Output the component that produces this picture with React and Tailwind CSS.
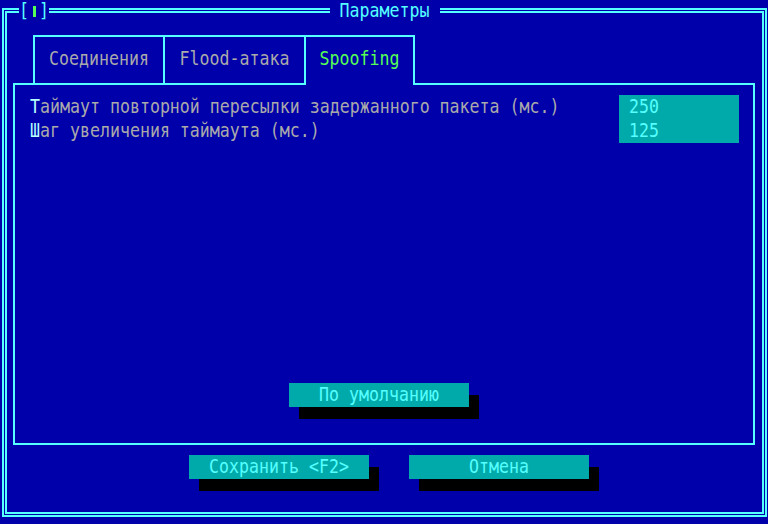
import React from 'react';

const fields = [
  { hot: 'Т', rest: 'аймаут повторной пересылки задержанного пакета (мс.)', value: '250' },
  { hot: 'Ш', rest: 'аг увеличения таймаута (мс.)', value: '125' },
];

const tabs = [
  { label: 'Соединения', w: 'w-[130px]' },
  { label: 'Flood-атака', w: 'w-[141px]' },
];

// текст в духе текстового режима: чуть вытянут по вертикали
function T({ children }) {
  return <span className="inline-block scale-y-[1.2] whitespace-pre">{children}</span>;
}

function Button({ children }) {
  return (
    <div className="w-[180px] h-[24px] leading-[24px] bg-[#00aaaa] text-[#55ffff] text-center shadow-[10px_12px_0_0_#000000]">
      <T>{children}</T>
    </div>
  );
}

export default function App() {
  return (
    <div className="w-[768px] h-[524px] bg-[#0000aa] pt-[8px] pl-[2px] font-['DejaVu_Sans_Mono','Liberation_Mono',monospace] text-[16.6px] text-[#aaaaaa] overflow-hidden">
      {/* двойная рамка окна */}
      <div className="relative w-[765px] h-[509px] border-2 border-[#55ffff] p-px">
        <div className="h-full border-2 border-[#55ffff] pl-[6px] pt-[22px]">
          {/* вкладки */}
          <div className="flex ml-[20px] h-[48px]">
            {tabs.map((t) => (
              <div
                key={t.label}
                className={`${t.w} h-[48px] border-t-2 border-l-2 border-[#55ffff] flex items-center justify-center pb-[2px]`}
              >
                <T>{t.label}</T>
              </div>
            ))}
            <div className="relative z-10 w-[111px] h-[50px] border-t-2 border-x-2 border-[#55ffff] bg-[#0000aa] flex items-center justify-center pb-[4px] text-[#55ff55]">
              <T>Spoofing</T>
            </div>
          </div>

          {/* панель вкладки */}
          <div className="w-[742px] h-[362px] border-2 border-[#55ffff] flex flex-col pt-[10px] pl-[15px] pr-[14px]">
            <div className="flex">
              <div className="flex-1">
                {fields.map((f) => (
                  <div key={f.hot} className="h-[24px] leading-[24px]">
                    <T>
                      <span className="text-[#b8ffff]">{f.hot}</span>
                      {f.rest}
                    </T>
                  </div>
                ))}
              </div>
              <div className="w-[120px] bg-[#00aaaa] text-[#55ffff] pl-[10px]">
                {fields.map((f) => (
                  <div key={f.value} className="h-[24px] leading-[24px]">
                    <T>{f.value}</T>
                  </div>
                ))}
              </div>
            </div>
            <div className="mt-auto mb-[36px] ml-[259px]">
              <Button>По умолчанию</Button>
            </div>
          </div>

          {/* кнопки диалога */}
          <div className="flex gap-[40px] mt-[10px] ml-[176px]">
            <Button>Сохранить &lt;F2&gt;</Button>
            <Button>Отмена</Button>
          </div>
        </div>

        {/* заголовок поверх рамки */}
        <div className="absolute top-[-11px] left-[15px] w-[30px] h-[24px] bg-[#0000aa] flex items-center text-[#55ffff] leading-[24px]">
          <span className="w-[10px] text-center">
            <T>[</T>
          </span>
          <span className="w-[10px] flex justify-center">
            <span className="w-[3px] h-[11px] bg-[#55ff55]" />
          </span>
          <span className="w-[10px] text-center">
            <T>]</T>
          </span>
        </div>
        <div className="absolute top-[-11px] left-1/2 -translate-x-1/2 w-[110px] h-[24px] leading-[24px] bg-[#0000aa] text-center text-[#55ffff]">
          <T>Параметры</T>
        </div>
      </div>
    </div>
  );
}
